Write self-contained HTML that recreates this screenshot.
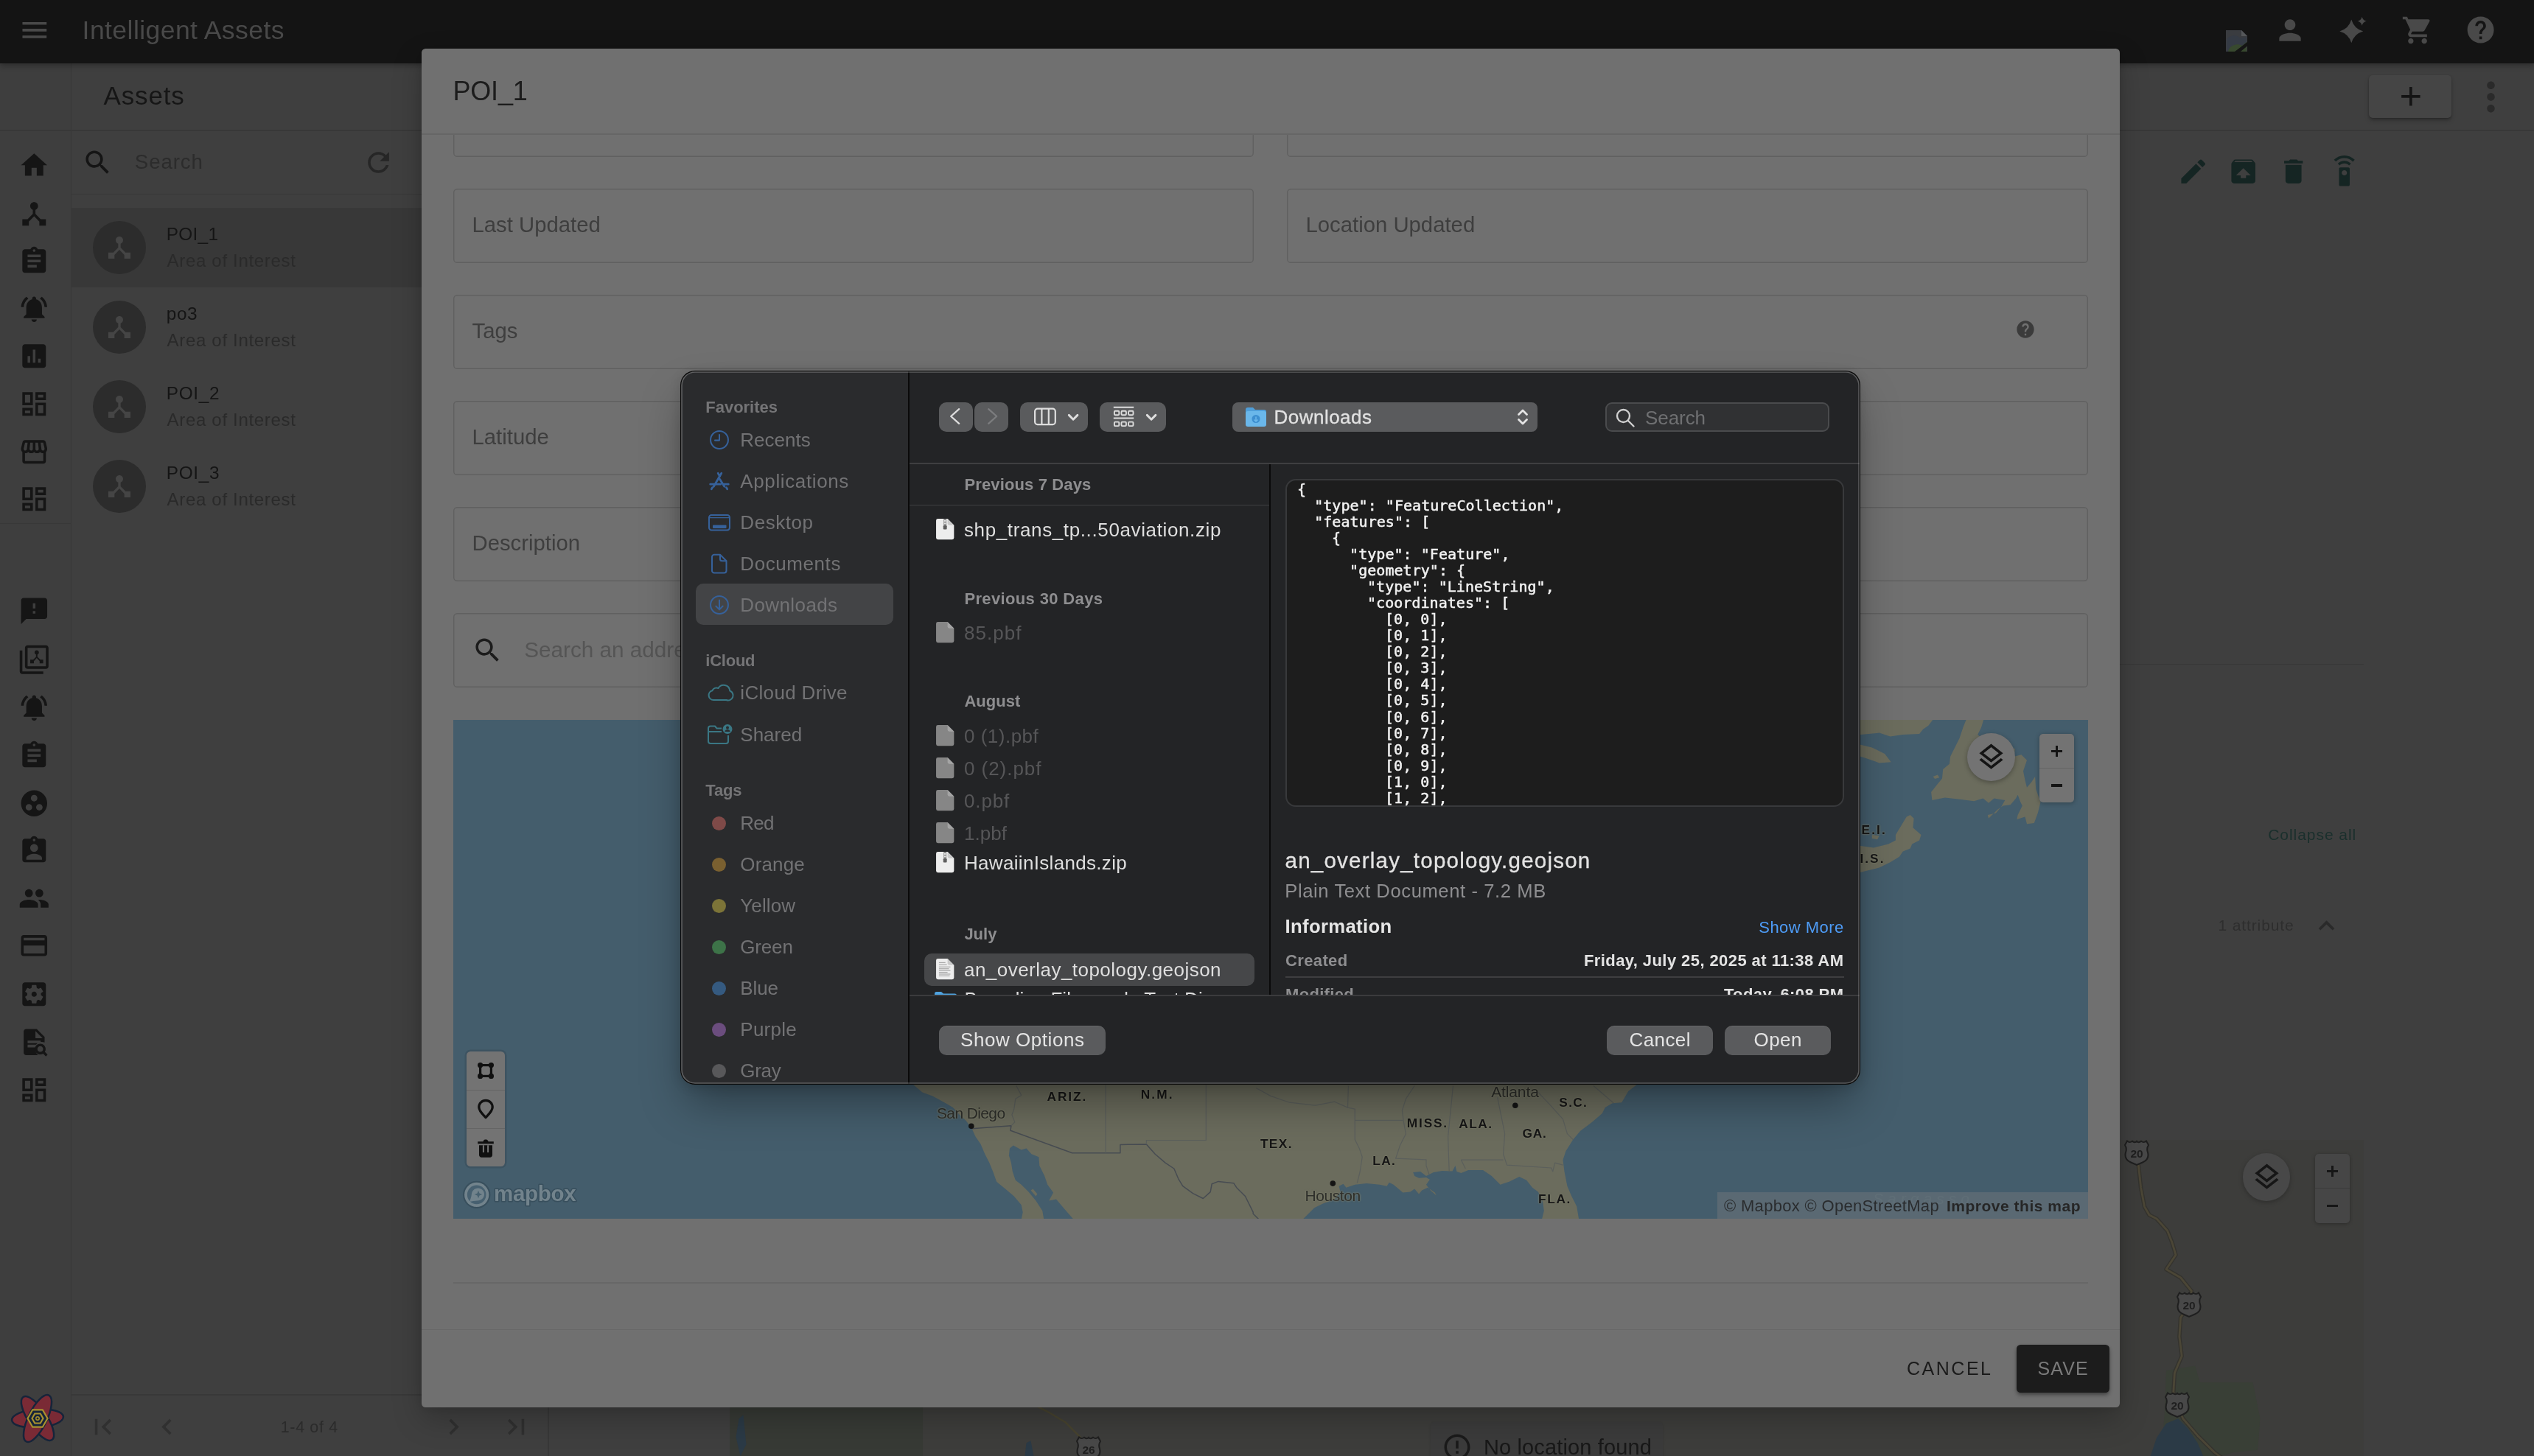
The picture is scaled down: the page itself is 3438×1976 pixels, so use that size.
<!DOCTYPE html>
<html lang="en"><head><meta charset="utf-8"><title>Intelligent Assets</title>
<style>
html,body{margin:0;padding:0;background:#3e3e3e;}
body{width:3438px;height:1976px;position:relative;overflow:hidden;font-family:"Liberation Sans",sans-serif;}
.t{position:absolute;white-space:pre;}
svg{display:block;overflow:visible;}
#root{position:absolute;left:0;top:0;width:3438px;height:1976px;will-change:transform;}
</style></head><body><div id="root">
<!-- app background -->
<div style="position:absolute;left:0px;top:0px;width:3438px;height:1976px;background:#3f3f3f;"></div>
<div style="position:absolute;left:0px;top:86px;width:96px;height:1890px;background:#3e3e3e;"></div>
<div style="position:absolute;left:96px;top:86px;width:1.3px;height:1890px;background:#383838;"></div>
<div style="position:absolute;left:0px;top:176px;width:3438px;height:1.5px;background:#383838;"></div>
<div class="t" style="left:140.60px;top:107.47px;font-size:35px;line-height:46px;color:#161616;letter-spacing:0.828px;">Assets</div>
<div style="position:absolute;left:743px;top:178px;width:1.5px;height:1798px;background:#383838;"></div>
<div style="position:absolute;left:97px;top:262.5px;width:647px;height:1.5px;background:#383838;"></div>
<svg style="position:absolute;left:111.10px;top:199.20px;" width="43" height="43" viewBox="0 0 24 24" fill="#151515"><path d="M15.5 14h-.79l-.28-.27C15.41 12.59 16 11.11 16 9.5 16 5.91 13.09 3 9.5 3S3 5.91 3 9.5 5.91 16 9.5 16c1.61 0 3.09-.59 4.23-1.57l.27.28v.79l5 4.99L20.49 19l-4.99-5zm-6 0C7.01 14 5 11.99 5 9.500S7.01 5 9.500 5 14 7.010 14 9.500 11.990 14 9.500 14z"/></svg>
<div class="t" style="left:182.80px;top:202.00px;font-size:27.7px;line-height:36px;color:#2c2c2c;letter-spacing:0.872px;">Search</div>
<svg style="position:absolute;left:492.10px;top:199.30px;" width="43" height="43" viewBox="0 0 24 24" fill="#262626"><path d="M17.65 6.35C16.2 4.9 14.21 4 12 4c-4.42 0-7.99 3.58-7.99 8s3.57 8 7.99 8c3.73 0 6.84-2.55 7.73-6h-2.08c-.82 2.33-3.04 4-5.65 4-3.31 0-6-2.69-6-6s2.69-6 6-6c1.66 0 3.14.69 4.22 1.78L13 11h7V4l-2.35 2.35z"/></svg>
<div style="position:absolute;left:97.3px;top:282px;width:646px;height:108px;background:#383838;"></div>
<div style="position:absolute;left:126px;top:299.8px;width:72px;height:72px;background:#2c2c2c;border-radius:50%;"></div>
<svg style="position:absolute;left:142.00px;top:315.80px;" width="40" height="40" viewBox="0 0 24 24" fill="#454545"><path d="M17 16l-4-4V8.82C14.16 8.4 15 7.3 15 6c0-1.66-1.34-3-3-3S9 4.34 9 6c0 1.3.84 2.4 2 2.82V12l-4 4H3v5h5v-3.05l4-4.2 4 4.2V21h5v-5h-4z"/></svg>
<div class="t" style="left:225.80px;top:301.65px;font-size:24.4px;line-height:32px;color:#151515;letter-spacing:0.265px;">POI_1</div>
<div class="t" style="left:226.60px;top:338.08px;font-size:24px;line-height:31px;color:#2a2a2a;letter-spacing:0.682px;">Area of Interest</div>
<div style="position:absolute;left:126px;top:407.9px;width:72px;height:72px;background:#2c2c2c;border-radius:50%;"></div>
<svg style="position:absolute;left:142.00px;top:423.90px;" width="40" height="40" viewBox="0 0 24 24" fill="#454545"><path d="M17 16l-4-4V8.82C14.16 8.4 15 7.3 15 6c0-1.66-1.34-3-3-3S9 4.34 9 6c0 1.3.84 2.4 2 2.82V12l-4 4H3v5h5v-3.05l4-4.2 4 4.2V21h5v-5h-4z"/></svg>
<div class="t" style="left:225.80px;top:409.75px;font-size:24.4px;line-height:32px;color:#151515;letter-spacing:0.596px;">po3</div>
<div class="t" style="left:226.60px;top:446.18px;font-size:24px;line-height:31px;color:#2a2a2a;letter-spacing:0.682px;">Area of Interest</div>
<div style="position:absolute;left:126px;top:516.0px;width:72px;height:72px;background:#2c2c2c;border-radius:50%;"></div>
<svg style="position:absolute;left:142.00px;top:532.00px;" width="40" height="40" viewBox="0 0 24 24" fill="#454545"><path d="M17 16l-4-4V8.82C14.16 8.4 15 7.3 15 6c0-1.66-1.34-3-3-3S9 4.34 9 6c0 1.3.84 2.4 2 2.82V12l-4 4H3v5h5v-3.05l4-4.2 4 4.2V21h5v-5h-4z"/></svg>
<div class="t" style="left:225.80px;top:517.85px;font-size:24.4px;line-height:32px;color:#151515;letter-spacing:0.665px;">POI_2</div>
<div class="t" style="left:226.60px;top:554.28px;font-size:24px;line-height:31px;color:#2a2a2a;letter-spacing:0.682px;">Area of Interest</div>
<div style="position:absolute;left:126px;top:624.0999999999999px;width:72px;height:72px;background:#2c2c2c;border-radius:50%;"></div>
<svg style="position:absolute;left:142.00px;top:640.10px;" width="40" height="40" viewBox="0 0 24 24" fill="#454545"><path d="M17 16l-4-4V8.82C14.16 8.4 15 7.3 15 6c0-1.66-1.34-3-3-3S9 4.34 9 6c0 1.3.84 2.4 2 2.82V12l-4 4H3v5h5v-3.05l4-4.2 4 4.2V21h5v-5h-4z"/></svg>
<div class="t" style="left:225.80px;top:625.95px;font-size:24.4px;line-height:32px;color:#151515;letter-spacing:0.665px;">POI_3</div>
<div class="t" style="left:226.60px;top:662.38px;font-size:24px;line-height:31px;color:#2a2a2a;letter-spacing:0.682px;">Area of Interest</div>
<div style="position:absolute;left:97px;top:1892.3px;width:647px;height:1.5px;background:#383838;"></div>
<svg style="position:absolute;left:118.10px;top:1915.10px;" width="43" height="43" viewBox="0 0 24 24" fill="#303030"><path d="M18.41 16.59L13.82 12l4.59-4.59L17 6l-6 6 6 6zM6 6h2v12H6z"/></svg>
<svg style="position:absolute;left:205.00px;top:1915.10px;" width="43" height="43" viewBox="0 0 24 24" fill="#303030"><path d="M15.41 7.41L14 6l-6 6 6 6 1.41-1.41L10.83 12z"/></svg>
<div class="t" style="left:380.80px;top:1922.68px;font-size:21.4px;line-height:28px;color:#2b2b2b;letter-spacing:0.679px;">1-4 of 4</div>
<svg style="position:absolute;left:593.70px;top:1915.10px;" width="43" height="43" viewBox="0 0 24 24" fill="#303030"><path d="M10 6L8.59 7.41 13.17 12l-4.58 4.59L10 18l6-6z"/></svg>
<svg style="position:absolute;left:678.90px;top:1915.10px;" width="43" height="43" viewBox="0 0 24 24" fill="#303030"><path d="M5.59 7.41L10.18 12l-4.59 4.59L7 18l6-6-6-6zM16 6h2v12h-2z"/></svg>
<svg style="position:absolute;left:25.10px;top:203.30px;" width="42.6" height="42.6" viewBox="0 0 24 24" fill="#151515"><path d="M10 20v-6h4v6h5v-8h3L12 3 2 12h3v8z"/></svg>
<svg style="position:absolute;left:25.10px;top:268.70px;" width="42.6" height="42.6" viewBox="0 0 24 24" fill="#151515"><path d="M17 16l-4-4V8.82C14.16 8.4 15 7.3 15 6c0-1.66-1.34-3-3-3S9 4.34 9 6c0 1.3.84 2.4 2 2.82V12l-4 4H3v5h5v-3.05l4-4.2 4 4.2V21h5v-5h-4z"/></svg>
<svg style="position:absolute;left:25.10px;top:332.90px;" width="42.6" height="42.6" viewBox="0 0 24 24" fill="#151515"><path d="M19 3h-4.18C14.4 1.84 13.3 1 12 1c-1.3 0-2.4.84-2.82 2H5c-1.1 0-2 .9-2 2v14c0 1.1.9 2 2 2h14c1.1 0 2-.9 2-2V5c0-1.1-.9-2-2-2zm-7 0c.55 0 1 .45 1 1s-.45 1-1 1-1-.45-1-1 .45-1 1-1zm2 14H7v-2h7v2zm3-4H7v-2h10v2zm0-4H7V7h10v2z"/></svg>
<svg style="position:absolute;left:25.10px;top:398.00px;" width="42.6" height="42.6" viewBox="0 0 24 24" fill="#151515"><path d="M7.58 4.08L6.15 2.65C3.75 4.48 2.17 7.3 2.03 10.5h2c.15-2.65 1.51-4.97 3.55-6.42zm12.39 6.42h2c-.15-3.2-1.73-6.02-4.12-7.85l-1.42 1.43c2.02 1.45 3.39 3.77 3.54 6.42zM18 11c0-3.07-1.64-5.64-4.5-6.32V4c0-.83-.67-1.5-1.5-1.5s-1.5.67-1.5 1.5v.68C7.63 5.36 6 7.92 6 11v5l-2 2v1h16v-1l-2-2v-5zm-6 11c.14 0 .27-.01.4-.04.65-.14 1.18-.58 1.44-1.18.1-.24.15-.5.15-.78h-4c.01 1.1.9 2 2.01 2z"/></svg>
<svg style="position:absolute;left:25.10px;top:462.20px;" width="42.6" height="42.6" viewBox="0 0 24 24" fill="#151515"><path d="M19 3H5c-1.1 0-2 .9-2 2v14c0 1.1.9 2 2 2h14c1.1 0 2-.9 2-2V5c0-1.1-.9-2-2-2zM9 17H7v-5h2v5zm4 0h-2V7h2v10zm4 0h-2v-3h2v3z"/></svg>
<svg style="position:absolute;left:25.10px;top:527.00px;" width="42.6" height="42.6" viewBox="0 0 24 24" fill="#151515"><path d="M19 5v2h-4V5h4M9 5v6H5V5h4m10 8v6h-4v-6h4M9 17v2H5v-2h4M21 3h-8v6h8V3zM11 3H3v10h8V3zm10 8h-8v10h8V11zm-10 4H3v6h8v-6z"/></svg>
<svg style="position:absolute;left:25.10px;top:592.20px;" width="42.6" height="42.6" viewBox="0 0 24 24" fill="#151515"><path d="M21.9 8.89l-1.05-4.37c-.22-.9-1-1.52-1.91-1.52H5.05c-.9 0-1.69.63-1.9 1.52L2.1 8.89c-.24 1.02-.02 2.06.62 2.88.08.11.19.19.28.29V19c0 1.1.9 2 2 2h14c1.1 0 2-.9 2-2v-6.94c.09-.09.2-.18.28-.28.64-.82.87-1.87.62-2.89zm-2.99-3.9l1.05 4.37c.1.42.01.84-.25 1.17-.14.18-.44.47-.94.47-.61 0-1.14-.49-1.21-1.14L16.98 5l1.93-.01zM13 5h1.96l.54 4.52c.05.39-.07.78-.33 1.07-.22.26-.54.41-.95.41-.67 0-1.22-.59-1.22-1.31V5zM8.49 9.52L9.04 5H11v4.69c0 .72-.55 1.31-1.29 1.31-.34 0-.65-.15-.89-.41-.25-.29-.37-.68-.33-1.07zm-4.45-.16L5.05 5h1.97l-.58 4.86c-.08.65-.6 1.14-1.21 1.14-.49 0-.8-.29-.93-.47-.27-.32-.36-.75-.26-1.17zM5 19v-6.03c.08.01.15.03.23.03.87 0 1.66-.36 2.24-.95.6.6 1.4.95 2.31.95.87 0 1.65-.36 2.23-.93.59.57 1.39.93 2.29.93.84 0 1.64-.35 2.24-.95.58.59 1.37.95 2.24.95.08 0 .15-.02.23-.03V19H5z"/></svg>
<svg style="position:absolute;left:25.10px;top:655.70px;" width="42.6" height="42.6" viewBox="0 0 24 24" fill="#151515"><path d="M19 5v2h-4V5h4M9 5v6H5V5h4m10 8v6h-4v-6h4M9 17v2H5v-2h4M21 3h-8v6h8V3zM11 3H3v10h8V3zm10 8h-8v10h8V11zm-10 4H3v6h8v-6z"/></svg>
<svg style="position:absolute;left:25.10px;top:807.70px;" width="42.6" height="42.6" viewBox="0 0 24 24" fill="#151515"><path d="M20 2H4c-1.1 0-1.99.9-1.99 2L2 22l4-4h14c1.1 0 2-.9 2-2V4c0-1.1-.9-2-2-2zm-7 12h-2v-2h2v2zm0-4h-2V6h2v4z"/></svg>
<svg style="position:absolute;left:25.10px;top:874.30px;" width="42.6" height="42.6" viewBox="0 0 24 24" fill="#151515"><path d="M3 5H1v16c0 1.1.9 2 2 2h16v-2H3V5zm18-4H7c-1.1 0-2 .9-2 2v14c0 1.1.9 2 2 2h14c1.1 0 2-.9 2-2V3c0-1.1-.9-2-2-2zm0 16H7V3h14v14z"/><g transform="translate(7.4,3.2) scale(0.55)"><path d="M17 16l-4-4V8.82C14.16 8.4 15 7.3 15 6c0-1.66-1.34-3-3-3S9 4.34 9 6c0 1.3.84 2.4 2 2.82V12l-4 4H3v5h5v-3.05l4-4.2 4 4.2V21h5v-5h-4z"/></g></svg>
<svg style="position:absolute;left:25.10px;top:939.10px;" width="42.6" height="42.6" viewBox="0 0 24 24" fill="#151515"><path d="M7.58 4.08L6.15 2.65C3.75 4.48 2.17 7.3 2.03 10.5h2c.15-2.65 1.51-4.97 3.55-6.42zm12.39 6.42h2c-.15-3.2-1.73-6.02-4.12-7.85l-1.42 1.43c2.02 1.45 3.39 3.77 3.54 6.42zM18 11c0-3.07-1.64-5.64-4.5-6.32V4c0-.83-.67-1.5-1.5-1.5s-1.5.67-1.5 1.5v.68C7.63 5.36 6 7.92 6 11v5l-2 2v1h16v-1l-2-2v-5zm-6 11c.14 0 .27-.01.4-.04.65-.14 1.18-.58 1.44-1.18.1-.24.15-.5.15-.78h-4c.01 1.1.9 2 2.01 2z"/></svg>
<svg style="position:absolute;left:25.10px;top:1004.10px;" width="42.6" height="42.6" viewBox="0 0 24 24" fill="#151515"><path d="M19 3h-4.18C14.4 1.84 13.3 1 12 1c-1.3 0-2.4.84-2.82 2H5c-1.1 0-2 .9-2 2v14c0 1.1.9 2 2 2h14c1.1 0 2-.9 2-2V5c0-1.1-.9-2-2-2zm-7 0c.55 0 1 .45 1 1s-.45 1-1 1-1-.45-1-1 .45-1 1-1zm2 14H7v-2h7v2zm3-4H7v-2h10v2zm0-4H7V7h10v2z"/></svg>
<svg style="position:absolute;left:25.10px;top:1069.20px;" width="42.6" height="42.6" viewBox="0 0 24 24" fill="#151515"><path d="M12 2C6.48 2 2 6.48 2 12s4.48 10 10 10 10-4.48 10-10S17.52 2 12 2zM8 17.5c-1.38 0-2.5-1.12-2.5-2.5s1.12-2.5 2.5-2.5 2.5 1.12 2.5 2.5-1.12 2.5-2.5 2.5zM9.5 8c0-1.38 1.12-2.5 2.5-2.5s2.5 1.12 2.5 2.5-1.12 2.5-2.5 2.5S9.5 9.38 9.5 8zm6.5 9.5c-1.38 0-2.5-1.12-2.5-2.5s1.12-2.5 2.5-2.5 2.5 1.12 2.5 2.5-1.12 2.5-2.5 2.5z"/></svg>
<svg style="position:absolute;left:25.10px;top:1133.30px;" width="42.6" height="42.6" viewBox="0 0 24 24" fill="#151515"><path d="M19 3h-4.18C14.4 1.84 13.3 1 12 1c-1.3 0-2.4.84-2.82 2H5c-1.1 0-2 .9-2 2v14c0 1.1.9 2 2 2h14c1.1 0 2-.9 2-2V5c0-1.1-.9-2-2-2zm-7 0c.55 0 1 .45 1 1s-.45 1-1 1-1-.45-1-1 .45-1 1-1zm0 4c1.66 0 3 1.34 3 3s-1.34 3-3 3-3-1.34-3-3 1.34-3 3-3zm6 12H6v-1.4c0-2 4-3.1 6-3.1s6 1.1 6 3.1V19z"/></svg>
<svg style="position:absolute;left:25.10px;top:1198.40px;" width="42.6" height="42.6" viewBox="0 0 24 24" fill="#151515"><path d="M16 11c1.66 0 2.99-1.34 2.99-3S17.66 5 16 5c-1.66 0-3 1.34-3 3s1.34 3 3 3zm-8 0c1.66 0 2.99-1.34 2.99-3S9.66 5 8 5C6.34 5 5 6.34 5 8s1.34 3 3 3zm0 2c-2.33 0-7 1.17-7 3.5V19h14v-2.5c0-2.33-4.67-3.5-7-3.5zm8 0c-.29 0-.62.02-.97.05 1.16.84 1.97 1.97 1.97 3.45V19h6v-2.5c0-2.33-4.67-3.5-7-3.5z"/></svg>
<svg style="position:absolute;left:25.10px;top:1262.30px;" width="42.6" height="42.6" viewBox="0 0 24 24" fill="#151515"><path d="M20 4H4c-1.11 0-1.99.89-1.99 2L2 18c0 1.11.89 2 2 2h16c1.11 0 2-.89 2-2V6c0-1.11-.89-2-2-2zm0 14H4v-6h16v6zm0-10H4V6h16v2z"/></svg>
<svg style="position:absolute;left:25.10px;top:1328.20px;" width="42.6" height="42.6" viewBox="0 0 24 24" fill="#151515"><path d="M12 10c-1.1 0-2 .9-2 2s.9 2 2 2 2-.9 2-2-.9-2-2-2zm7-7H5c-1.11 0-2 .9-2 2v14c0 1.1.89 2 2 2h14c1.11 0 2-.9 2-2V5c0-1.1-.89-2-2-2zm-1.75 9c0 .23-.02.46-.05.68l1.48 1.16c.13.11.17.3.08.45l-1.4 2.42c-.09.15-.27.21-.43.15l-1.74-.7c-.36.28-.76.51-1.18.69l-.26 1.85c-.03.17-.18.3-.35.3h-2.8c-.17 0-.32-.13-.35-.29l-.26-1.85c-.43-.18-.82-.41-1.18-.69l-1.74.7c-.16.06-.34 0-.43-.15l-1.4-2.42c-.09-.15-.05-.34.08-.45l1.48-1.16c-.03-.23-.05-.46-.05-.69 0-.23.02-.46.05-.68l-1.48-1.16c-.13-.11-.17-.3-.08-.45l1.4-2.42c.09-.15.27-.21.43-.15l1.74.7c.36-.28.76-.51 1.18-.69l.26-1.85c.03-.17.18-.3.35-.3h2.8c.17 0 .32.13.35.29l.26 1.85c.43.18.82.41 1.18.69l1.74-.7c.16-.06.34 0 .43.15l1.4 2.42c.09.15.05.34-.08.45l-1.48 1.16c.03.23.05.46.05.69z"/></svg>
<svg style="position:absolute;left:25.10px;top:1392.70px;" width="42.6" height="42.6" viewBox="0 0 24 24" fill="#151515"><path d="M14 2H6c-1.1 0-2 .9-2 2v16c0 1.1.9 2 2 2h9.1c-.4-.3-.7-.6-1-1-.7-.9-1.1-2-1.1-3.2 0-.6.1-1.2.3-1.8H7v-2h6.4c.4-.5.8-.9 1.300-1.200H7v-2h10v1.100c.3-.1.7-.1 1-.1 .7 0 1.400.100 2 .400V8l-6-6zm-1 7V3.500L18.500 9H13z"/><path d="M22.300 21.600l-2.100-2.100c.4-.7.6-1.400.6-2.200 0-2.300-1.800-4.100-4.100-4.100s-4.100 1.800-4.100 4.100 1.800 4.100 4.100 4.100c.8 0 1.600-.2 2.200-.6l2.100 2.100 1.300-1.300zm-5.600-2.100c-1.200 0-2.200-1-2.200-2.200s1-2.200 2.200-2.200 2.200 1 2.200 2.200-1 2.200-2.200 2.200z"/></svg>
<svg style="position:absolute;left:25.10px;top:1457.60px;" width="42.6" height="42.6" viewBox="0 0 24 24" fill="#151515"><path d="M19 5v2h-4V5h4M9 5v6H5V5h4m10 8v6h-4v-6h4M9 17v2H5v-2h4M21 3h-8v6h8V3zM11 3H3v10h8V3zm10 8h-8v10h8V11zm-10 4H3v6h8v-6z"/></svg>
<div style="position:absolute;left:0px;top:709.5px;width:96px;height:1.5px;background:#383838;"></div>
<div style="position:absolute;left:3214px;top:102.4px;width:112.4px;height:57.4px;background:#454545;border-radius:5px;box-shadow:0 4px 6px -1px rgba(0,0,0,.28),0 1px 3px rgba(0,0,0,.2);"></div>
<svg style="position:absolute;left:3248.65px;top:108.65px;" width="43.7" height="43.7" viewBox="0 0 24 24" fill="#141414"><path d="M19 13h-6v6h-2v-6H5v-2h6V5h2v6h6v2z"/></svg>
<svg style="position:absolute;left:3347.90px;top:99.80px;" width="63" height="63" viewBox="0 0 24 24" fill="#2a2a2a"><path d="M12 8c1.1 0 2-.9 2-2s-.9-2-2-2-2 .9-2 2 .9 2 2 2zm0 2c-1.1 0-2 .9-2 2s.9 2 2 2 2-.9 2-2-.9-2-2-2zm0 6c-1.1 0-2 .9-2 2s.9 2 2 2 2-.9 2-2-.9-2-2-2z"/></svg>
<svg style="position:absolute;left:2953.90px;top:210.50px;" width="43.4" height="43.4" viewBox="0 0 24 24" fill="#152523"><path d="M3 17.25V21h3.75L17.81 9.94l-3.75-3.75L3 17.25zM20.71 7.04c.39-.39.39-1.02 0-1.41l-2.34-2.34c-.39-.39-1.02-.39-1.41 0l-1.83 1.83 3.75 3.75 1.83-1.83z"/></svg>
<svg style="position:absolute;left:3022.10px;top:210.50px;" width="43.4" height="43.4" viewBox="0 0 24 24" fill="#152523"><path d="M20.55 5.22l-1.39-1.68C18.88 3.21 18.47 3 18 3H6c-.47 0-.88.21-1.15.55L3.46 5.22C3.17 5.57 3 6.01 3 6.5V19c0 1.1.89 2 2 2h14c1.1 0 2-.9 2-2V6.5c0-.49-.17-.93-.45-1.28zM12 9.5l5.5 5.5H14v2h-4v-2H6.5L12 9.5zM5.12 5l.82-1h12l.93 1H5.12z"/></svg>
<svg style="position:absolute;left:3089.80px;top:210.50px;" width="43.4" height="43.4" viewBox="0 0 24 24" fill="#152523"><path d="M6 19c0 1.1.9 2 2 2h8c1.1 0 2-.9 2-2V7H6v12zM19 4h-3.5l-1-1h-5l-1 1H5v2h14V4z"/></svg>
<svg style="position:absolute;left:3159.00px;top:210.50px;" width="43.4" height="43.4" viewBox="0 0 24 24" fill="#152523"><path d="M15 9H9c-.55 0-1 .45-1 1v12c0 .55.45 1 1 1h6c.55 0 1-.45 1-1V10c0-.55-.45-1-1-1zm-3 6c-1.1 0-2-.9-2-2s.9-2 2-2 2 .9 2 2-.9 2-2 2zM7.05 6.05l1.41 1.41C9.37 6.56 10.62 6 12 6s2.63.56 3.54 1.46l1.41-1.41C15.68 4.78 13.93 4 12 4s-3.68.78-4.95 2.05zM12 0C8.96 0 6.21 1.23 4.22 3.22l1.41 1.41C7.26 3.01 9.51 2 12 2s4.74 1.01 6.36 2.64l1.41-1.41C17.79 1.23 15.04 0 12 0z"/></svg>
<div style="position:absolute;left:2876px;top:900.7px;width:331px;height:1.5px;background:#383838;"></div>
<div class="t" style="left:3077.20px;top:1119.02px;font-size:21px;line-height:27px;color:#1a2f2c;letter-spacing:0.953px;">Collapse all</div>
<div class="t" style="left:3009.50px;top:1242.32px;font-size:21px;line-height:27px;color:#2e2e2e;letter-spacing:0.873px;">1 attribute</div>
<svg style="position:absolute;left:3135.20px;top:1234.50px;" width="43" height="43" viewBox="0 0 24 24" fill="#2a2a2a"><path d="M12 8l-6 6 1.41 1.41L12 10.83l4.59 4.58L18 14z"/></svg>
<div style="position:absolute;left:989.5px;top:1546.7px;width:2217px;height:430px;background:#3d3d3b;overflow:hidden;"><svg style="position:absolute;left:0;top:0" width="2219" height="430" viewBox="0 0 2219 430"><rect x="0" y="362" width="262" height="68" fill="#373a35"/><polygon points="12.5,378.3 18.5,373.3 22.5,413.3 14.5,429.3 8.5,403.3" fill="#2b3a46"/><polygon points="402.5,411.3 408.5,408.3 412.5,429.3 400.5,429.3" fill="#2b3a46"/><polyline points="410.5,358.3 430.5,368.3 455.5,383.3 474.5,402.3 486.5,420.3" fill="none" stroke="#47432f" stroke-width="2.500"/><polygon points="1942.4,433.8 1947.3,361.9 1949.0,312.9 1988.2,306.4 1994.7,329.2 2066.6,329.2 2076.4,378.3 2073.2,420.8 2040.5,424.0 2007.8,433.8" fill="#393f36"/><polygon points="1926.1,433.8 1935.9,404.4 1949.0,384.8 1965.3,378.3 1978.4,391.4 1991.5,411.0 2001.3,433.8" fill="#2b3a46"/><polyline points="1909.1,18.7 1911.4,35.0 1914.6,64.4 1919.5,90.6 1926.1,102.0 1935.9,106.9 1950.6,123.3 1957.1,139.6 1962.0,156.0 1949.0,175.6 1968.6,187.0 1983.3,205.0 1980.3,224.6 1968.6,241.0 1966.9,267.1 1970.2,293.3 1960.4,316.2 1958.8,342.3 1964.0,360.3 1971.8,378.3 1991.5,401.2 2014.3,424.0 2027.4,433.8" fill="none" stroke="#34332e" stroke-width="5.500" stroke-linejoin="round"/><polyline points="1909.1,18.7 1911.4,35.0 1914.6,64.4 1919.5,90.6 1926.1,102.0 1935.9,106.9 1950.6,123.3 1957.1,139.6 1962.0,156.0 1949.0,175.6 1968.6,187.0 1983.3,205.0 1980.3,224.6 1968.6,241.0 1966.9,267.1 1970.2,293.3 1960.4,316.2 1958.8,342.3 1964.0,360.3 1971.8,378.3 1991.5,401.2 2014.3,424.0 2027.4,433.8" fill="none" stroke="#4b4636" stroke-width="2.800" stroke-linejoin="round"/></svg><svg style="position:absolute;left:1891.1px;top:-0.20000000000004547px" width="36" height="35" viewBox="0 0 36 35"><path d="M5 1.500c2 2 5 2 7 .300 2 1.800 4.500 2 6 0 1.500 2 4 1.800 6 0 2 1.700 5 1.700 7-.300l3 5.500c-2 3-2.500 6-1 10 1.500 6-1 11-7 13.500l-8 3.500-8-3.500c-6-2.500-8.500-7.500-7-13.500 1.500-4 1-7-1-10z" fill="#484848" stroke="#1f1f1f" stroke-width="2"/><text x="18" y="23.500" font-family="Liberation Sans,sans-serif" font-size="15.500" font-weight="700" text-anchor="middle" fill="#1f1f1f">20</text></svg><svg style="position:absolute;left:1962.3000000000002px;top:206.5px" width="36" height="35" viewBox="0 0 36 35"><path d="M5 1.500c2 2 5 2 7 .300 2 1.800 4.500 2 6 0 1.500 2 4 1.800 6 0 2 1.700 5 1.700 7-.300l3 5.500c-2 3-2.500 6-1 10 1.500 6-1 11-7 13.500l-8 3.500-8-3.500c-6-2.500-8.500-7.500-7-13.500 1.500-4 1-7-1-10z" fill="#484848" stroke="#1f1f1f" stroke-width="2"/><text x="18" y="23.500" font-family="Liberation Sans,sans-serif" font-size="15.500" font-weight="700" text-anchor="middle" fill="#1f1f1f">20</text></svg><svg style="position:absolute;left:1946.0px;top:342.79999999999995px" width="36" height="35" viewBox="0 0 36 35"><path d="M5 1.500c2 2 5 2 7 .300 2 1.800 4.500 2 6 0 1.500 2 4 1.800 6 0 2 1.700 5 1.700 7-.300l3 5.500c-2 3-2.500 6-1 10 1.500 6-1 11-7 13.500l-8 3.500-8-3.500c-6-2.500-8.500-7.500-7-13.500 1.500-4 1-7-1-10z" fill="#484848" stroke="#1f1f1f" stroke-width="2"/><text x="18" y="23.500" font-family="Liberation Sans,sans-serif" font-size="15.500" font-weight="700" text-anchor="middle" fill="#1f1f1f">20</text></svg><svg style="position:absolute;left:469.5px;top:402.79999999999995px" width="36" height="35" viewBox="0 0 36 35"><path d="M5 1.500c2 2 5 2 7 .300 2 1.800 4.500 2 6 0 1.500 2 4 1.800 6 0 2 1.700 5 1.700 7-.300l3 5.500c-2 3-2.500 6-1 10 1.500 6-1 11-7 13.500l-8 3.500-8-3.500c-6-2.500-8.500-7.500-7-13.500 1.500-4 1-7-1-10z" fill="#484848" stroke="#1f1f1f" stroke-width="2"/><text x="18" y="23.500" font-family="Liberation Sans,sans-serif" font-size="15.500" font-weight="700" text-anchor="middle" fill="#1f1f1f">26</text></svg><div style="position:absolute;left:2053.4px;top:18.500000000000043px;width:64.4px;height:64.4px;background:#484848;border-radius:50%;box-shadow:0 2px 6px rgba(0,0,0,.25);"></div><svg style="position:absolute;left:2064.10px;top:29.20px;" width="43" height="43" viewBox="0 0 24 24" fill="#161616"><path d="M11.99 18.54l-7.37-5.73L3 14.07l9 7 9-7-1.63-1.27-7.38 5.74zM12 16l7.36-5.73L21 9l-9-7-9 7 1.63 1.27L12 16zm0-11.47L17.74 9 12 13.47 6.26 9 12 4.53z"/></svg><div style="position:absolute;left:2151.6px;top:19.299999999999955px;width:46.8px;height:94.2px;background:#464646;border-radius:5px;box-shadow:0 1px 5px rgba(0,0,0,.3);"></div><div style="position:absolute;left:2151.6px;top:65.39999999999986px;width:46.8px;height:1px;background:#3b3b3b;"></div><div style="position:absolute;left:2167.4500000000003px;top:40.85px;width:14.7px;height:3.3px;background:#161616;"></div><div style="position:absolute;left:2173.15px;top:35.15px;width:3.3px;height:14.7px;background:#161616;"></div><div style="position:absolute;left:2167.4500000000003px;top:87.9499999999999px;width:14.7px;height:3.3px;background:#161616;"></div></div>
<div style="position:absolute;left:1941px;top:1929px;width:315px;height:60px;background:#3b3b3b;border-radius:6px;box-shadow:0 1px 4px rgba(0,0,0,.15);"></div>
<svg style="position:absolute;left:1955.50px;top:1943.00px;" width="42" height="42" viewBox="0 0 24 24" fill="#1a1a1a"><path d="M11 15h2v2h-2zm0-8h2v6h-2zm.99-5C6.47 2 2 6.48 2 12s4.47 10 9.99 10C17.52 22 22 17.52 22 12S17.52 2 11.99 2zM12 20c-4.42 0-8-3.58-8-8s3.58-8 8-8 8 3.58 8 8-3.58 8-8 8z"/></svg>
<div class="t" style="left:2013.00px;top:1945.45px;font-size:29px;line-height:38px;color:#181818;letter-spacing:0.134px;">No location found</div>
<svg style="position:absolute;left:13.0px;top:1886.7px" width="76" height="76" viewBox="-38 -38 76 76"><g fill="#7a2a35" stroke="#16243a" stroke-width="2.500" transform="rotate(-4)"><ellipse rx="35" ry="12.500" transform="rotate(0)"/><ellipse rx="35" ry="12.500" transform="rotate(60)"/><ellipse rx="35" ry="12.500" transform="rotate(120)"/></g><g fill="none" stroke="#a8912f" stroke-width="2.200" transform="rotate(30)"><path d="M0 -13.500l11.700 6.750v13.500L0 13.500l-11.700-6.750v-13.500z" fill="#16243a"/><path d="M0 -7.500l6.500 3.750v7.500L0 7.500l-6.500-3.750v-7.500z"/></g><circle r="2.200" fill="none" stroke="#a8912f" stroke-width="1.500"/></svg>
<div style="position:absolute;left:0px;top:0px;width:3438px;height:86px;background:#141414;box-shadow:0 3px 8px rgba(0,0,0,.3);"></div>
<svg style="position:absolute;left:24.75px;top:18.75px;" width="43.7" height="43.7" viewBox="0 0 24 24" fill="#494949"><path d="M3 18h18v-2H3v2zm0-5h18v-2H3v2zm0-7v2h18V6H3z"/></svg>
<div class="t" style="left:111.60px;top:18.06px;font-size:35.6px;line-height:46px;color:#494949;letter-spacing:0.408px;">Intelligent Assets</div>
<svg style="position:absolute;left:3084.60px;top:18.60px;" width="44" height="44" viewBox="0 0 24 24" fill="#494949"><path d="M12 12c2.21 0 4-1.79 4-4s-1.79-4-4-4-4 1.79-4 4 1.79 4 4 4zm0 2c-2.67 0-8 1.34-8 4v2h16v-2c0-2.66-5.33-4-8-4z"/></svg>
<svg style="position:absolute;left:3169.8px;top:19px" width="44" height="44" viewBox="0 0 24 24" fill="#494949"><path d="M11.05 4.05Q12.96 10.84 19.75 12.75Q12.96 14.66 11.05 21.45Q9.14 14.66 2.35 12.75Q9.14 10.84 11.05 4.05z"/><path d="M18.90 2.00Q19.56 4.64 22.20 5.30Q19.56 5.96 18.90 8.60Q18.24 5.96 15.60 5.30Q18.24 4.64 18.90 2.00z"/></svg>
<svg style="position:absolute;left:3258.20px;top:18.50px;" width="44" height="44" viewBox="0 0 24 24" fill="#494949"><path d="M7 18c-1.1 0-1.99.9-1.99 2S5.9 22 7 22s2-.9 2-2-.9-2-2-2zM1 2v2h2l3.6 7.59-1.35 2.45c-.16.28-.25.61-.25.96 0 1.1.9 2 2 2h12v-2H7.42c-.14 0-.25-.11-.25-.25l.03-.12.9-1.63h7.45c.75 0 1.41-.41 1.75-1.03l3.58-6.49c.08-.14.12-.31.12-.48 0-.55-.45-1-1-1H5.21l-.94-2H1zm16 16c-1.1 0-1.99.9-1.99 2s.89 2 1.99 2 2-.9 2-2-.9-2-2-2z"/></svg>
<svg style="position:absolute;left:3344.10px;top:19.00px;" width="43.2" height="43.2" viewBox="0 0 24 24" fill="#494949"><path d="M12 2C6.48 2 2 6.48 2 12s4.48 10 10 10 10-4.48 10-10S17.52 2 12 2zm1 17h-2v-2h2v2zm2.07-7.75l-.9.92C13.45 12.9 13 13.5 13 15h-2v-.5c0-1.1.45-2.1 1.17-2.83l1.24-1.26c.37-.36.59-.86.59-1.41 0-1.1-.9-2-2-2s-2 .9-2 2H8c0-2.21 1.79-4 4-4s4 1.79 4 4c0 .88-.36 1.68-.93 2.25z"/></svg>
<svg style="position:absolute;left:3020.2px;top:41.2px" width="29" height="29" viewBox="0 0 29 29"><path d="M0 0h21l8 8v21H0z" fill="#3a3c40"/><path d="M21 0v8h8z" fill="#55575a"/><path d="M1 12c6-6 13-6 19-1l8-2v20H1z" fill="#353b45"/><path d="M3 29c2-9 12-12 19-8l6-5v13z" fill="#38492f"/><path d="M12 29L29 16v5.500L20 29z" fill="#151515"/></svg>
<!-- modal -->
<div style="position:absolute;left:572px;top:66px;width:2304px;height:1843.5px;background:#707070;border-radius:5.500px;box-shadow:0 16px 40px rgba(0,0,0,.22),0 0 14px rgba(0,0,0,.12);"></div>
<div class="t" style="left:614.50px;top:100.03px;font-size:36px;line-height:47px;color:#1c1c1c;letter-spacing:-0.212px;">POI_1</div>
<div style="position:absolute;left:615px;top:160px;width:1086px;height:52.5px;border-radius:5.300px;box-shadow:inset 0 0 0 1.400px #606060;"></div>
<div style="position:absolute;left:1746px;top:160px;width:1087px;height:52.5px;border-radius:5.300px;box-shadow:inset 0 0 0 1.400px #606060;"></div>
<div style="position:absolute;left:574px;top:150px;width:2300px;height:31.3px;background:#707070;"></div>
<div style="position:absolute;left:572px;top:181.3px;width:2304px;height:1.4px;background:#666666;"></div>
<div style="position:absolute;left:615px;top:256px;width:1086px;height:101px;border-radius:5.300px;box-shadow:inset 0 0 0 1.400px #606060;"></div><div class="t" style="left:640.50px;top:285.85px;font-size:29.3px;line-height:38px;color:#3e3e3e;">Last Updated</div>
<div style="position:absolute;left:1746px;top:256px;width:1087px;height:101px;border-radius:5.300px;box-shadow:inset 0 0 0 1.400px #606060;"></div><div class="t" style="left:1771.50px;top:285.85px;font-size:29.3px;line-height:38px;color:#3e3e3e;">Location Updated</div>
<div style="position:absolute;left:615px;top:400px;width:2218px;height:101px;border-radius:5.300px;box-shadow:inset 0 0 0 1.400px #606060;"></div><div class="t" style="left:640.50px;top:429.85px;font-size:29.3px;line-height:38px;color:#3e3e3e;">Tags</div>
<svg style="position:absolute;left:2734.00px;top:432.50px;" width="28" height="28" viewBox="0 0 24 24" fill="#3b3b3b"><path d="M12 2C6.48 2 2 6.48 2 12s4.48 10 10 10 10-4.48 10-10S17.52 2 12 2zm1 17h-2v-2h2v2zm2.07-7.75l-.9.92C13.45 12.9 13 13.5 13 15h-2v-.5c0-1.1.45-2.1 1.17-2.83l1.24-1.26c.37-.36.59-.86.59-1.41 0-1.1-.9-2-2-2s-2 .9-2 2H8c0-2.21 1.79-4 4-4s4 1.79 4 4c0 .88-.36 1.68-.93 2.25z"/></svg>
<div style="position:absolute;left:615px;top:544px;width:1086px;height:101px;border-radius:5.300px;box-shadow:inset 0 0 0 1.400px #606060;"></div><div class="t" style="left:640.50px;top:573.85px;font-size:29.3px;line-height:38px;color:#3e3e3e;">Latitude</div>
<div style="position:absolute;left:1746px;top:544px;width:1087px;height:101px;border-radius:5.300px;box-shadow:inset 0 0 0 1.400px #606060;"></div>
<div style="position:absolute;left:615px;top:688px;width:1086px;height:101px;border-radius:5.300px;box-shadow:inset 0 0 0 1.400px #606060;"></div><div class="t" style="left:640.50px;top:717.85px;font-size:29.3px;line-height:38px;color:#3e3e3e;">Description</div>
<div style="position:absolute;left:1746px;top:688px;width:1087px;height:101px;border-radius:5.300px;box-shadow:inset 0 0 0 1.400px #606060;"></div>
<div style="position:absolute;left:615px;top:832px;width:2218px;height:101px;border-radius:5.300px;box-shadow:inset 0 0 0 1.400px #606060;"></div>
<svg style="position:absolute;left:639.90px;top:860.90px;" width="43" height="43" viewBox="0 0 24 24" fill="#1c1c1c"><path d="M15.5 14h-.79l-.28-.27C15.41 12.59 16 11.11 16 9.5 16 5.91 13.09 3 9.5 3S3 5.91 3 9.5 5.91 16 9.5 16c1.61 0 3.09-.59 4.23-1.57l.27.28v.79l5 4.99L20.49 19l-4.99-5zm-6 0C7.01 14 5 11.99 5 9.500S7.01 5 9.500 5 14 7.010 14 9.500 11.990 14 9.500 14z"/></svg>
<div class="t" style="left:711.20px;top:862.21px;font-size:29.7px;line-height:39px;color:#555555;">Search an address</div>
<div style="position:absolute;left:614.8px;top:977px;width:2218.4px;height:677px;background:#445d6c;overflow:hidden;"><svg style="position:absolute;left:0;top:0" width="2218" height="677" viewBox="0 0 2218 677"><polygon points="616.8,482.7 624.7,495.6 636.5,505.4 650.3,510.4 668.1,520.2 677.9,526.1 687.8,537.0 695.7,543.9 703.6,554.8 708.5,565.6 715.4,575.5 721.3,589.3 727.3,601.1 732.2,613.0 737.1,626.8 749.0,636.6 760.8,646.5 770.7,658.3 772.7,668.2 770.7,678.1 801.3,678.1 799.3,666.2 790.4,652.4 780.5,640.6 770.7,630.7 762.8,624.8 758.8,613.0 756.9,601.1 753.9,591.3 754.9,581.4 759.8,577.4 770.7,583.4 777.6,581.4 784.5,589.3 794.4,593.2 795.3,605.1 802.2,618.9 806.2,630.7 814.1,641.6 808.2,652.4 818.0,650.5 827.9,662.3 841.7,678.1 1152.3,678.1 1162.2,668.2 1168.1,662.3 1179.9,656.4 1195.7,650.5 1203.6,640.6 1201.6,632.7 1207.5,629.7 1211.5,634.7 1223.3,630.7 1239.1,629.1 1256.9,630.7 1266.7,632.7 1269.7,627.8 1275.6,630.7 1282.5,636.6 1288.4,641.6 1298.3,640.6 1304.2,636.6 1310.1,643.5 1314.1,638.6 1322.0,634.7 1331.8,641.6 1333.8,645.5 1325.9,638.6 1320.0,630.7 1324.9,623.8 1320.0,620.9 1310.1,621.8 1304.2,618.9 1302.2,613.9 1312.1,613.0 1320.0,618.9 1329.9,613.9 1341.7,612.0 1355.5,612.6 1359.5,605.1 1361.4,613.0 1367.4,614.9 1377.2,611.0 1397.0,611.0 1408.8,618.9 1420.6,630.7 1432.5,626.8 1446.3,619.9 1456.2,624.8 1464.0,634.7 1471.9,640.6 1477.9,652.4 1479.8,666.2 1476.9,678.1 1527.2,678.1 1524.2,660.3 1517.3,646.5 1511.4,632.7 1507.5,613.0 1505.5,597.2 1509.4,585.3 1519.3,569.6 1529.2,557.7 1544.9,545.9 1558.8,534.0 1562.7,526.1 1572.6,520.2 1585.2,519.2 1594.2,504.0 1621.2,483.0" fill="#6b6c5d"/><polygon points="783.5,638.6 786.5,636.6 792.4,643.5 790.4,646.5" fill="#6b6c5d"/><polygon points="1885.2,-2.2 2008.8,-2.2 2001.4,7.7 1994.0,12.7 1989.1,18.9 1966.8,20.1 1949.5,22.6 1934.7,17.6 1909.4,20.1 1885.2,20.1" fill="#6b6c5d"/><polygon points="1885.2,32.5 1909.4,33.7 1924.8,37.4 1942.1,46.1 1950.7,57.2 1934.7,58.4 1917.3,52.2 1909.4,49.8 1885.2,49.8" fill="#6b6c5d"/><polygon points="2053.4,-2.2 2076.8,-2.2 2073.1,10.2 2068.2,20.1 2083.0,32.5 2107.8,44.8 2118.9,38.6 2117.6,49.8 2127.5,47.3 2135.0,54.7 2130.0,69.5 2132.5,81.9 2135.0,91.8 2141.1,84.4 2146.1,77.0 2147.3,94.3 2153.5,111.6 2149.8,126.4 2144.8,140.0 2135.0,141.3 2132.5,131.4 2121.4,135.1 2122.6,128.9 2128.8,116.5 2126.3,111.6 2122.6,101.7 2120.1,106.6 2112.7,115.3 2102.8,116.5 2095.4,121.5 2083.0,133.8 2081.8,128.9 2092.9,126.4 2100.3,117.8 2105.3,109.1 2090.4,106.6 2083.0,112.8 2075.6,106.6 2063.2,110.3 2045.9,107.9 2023.7,105.4 2006.4,109.1 2005.1,98.0 2013.8,86.9 2020.0,79.4 2021.2,67.1 2029.9,59.7 2031.1,49.8 2036.0,39.9 2043.5,25.0 2048.4,10.2" fill="#6b6c5d"/><polygon points="1976.7,128.9 1981.6,133.8 1980.4,146.2 1991.5,156.1 1989.1,163.5 1979.2,168.5 1976.7,174.6 1966.8,178.4 1961.9,185.8 1949.5,193.2 1934.7,200.6 1909.4,206.8 1885.2,210.5 1885.2,170.9 1909.4,170.9 1927.2,173.4 1947.0,168.5 1956.9,163.5 1956.9,156.1 1964.3,143.7 1971.7,131.4" fill="#6b6c5d"/><polygon points="1924.8,156.1 1934.7,157.3 1932.2,162.3 1924.8,161.0" fill="#6b6c5d"/><polygon points="2007.6,77.0 2013.8,74.5 2016.3,78.2 2010.1,79.9" fill="#6b6c5d"/><polyline points="703.6,554.8 756.9,550.8 755.9,557.3 839.7,587.7 904.9,587.7 904.9,576.5 940.4,575.9 952.2,589.3 966.0,601.1 977.9,609.0 983.8,622.8 989.7,632.7 1003.5,642.6 1017.3,649.5 1027.2,640.6 1029.2,629.7 1038.0,626.4 1058.8,628.7 1062.7,634.7 1074.5,646.5 1085.2,668.2 1085.2,670.2 1093.1,678.1" fill="none" stroke="#474c52" stroke-width="1.5" stroke-linejoin="round"/><polyline points="763.8,496.5 770.7,509.4 762.8,514.3 760.8,528.1 757.9,536.0 761.8,545.9 756.9,550.8" fill="none" stroke="#5b5f5c" stroke-width="1.2" stroke-linejoin="round"/><polyline points="885.1,495.6 885.1,587.7" fill="none" stroke="#5b5f5c" stroke-width="1.2" stroke-linejoin="round"/><polyline points="1021.3,495.6 1021.3,570.5 940.4,570.5 940.4,575.9" fill="none" stroke="#5b5f5c" stroke-width="1.2" stroke-linejoin="round"/><polyline points="1089.1,499.5 1108.9,510.4 1134.5,519.2 1170.0,523.2 1195.7,518.2 1213.5,526.1 1223.3,528.1 1223.3,569.6 1229.2,581.4 1233.2,593.2 1230.2,613.0 1226.3,628.7" fill="none" stroke="#5b5f5c" stroke-width="1.2" stroke-linejoin="round"/><polyline points="1223.3,543.3 1288.4,543.3" fill="none" stroke="#5b5f5c" stroke-width="1.2" stroke-linejoin="round"/><polyline points="1214.4,496.5 1213.5,526.1" fill="none" stroke="#5b5f5c" stroke-width="1.2" stroke-linejoin="round"/><polyline points="1304.2,496.5 1292.4,514.3 1287.4,530.1 1289.4,545.9 1292.4,561.7 1284.5,577.4 1278.6,595.2 1320.0,596.8 1320.0,605.1 1324.0,616.9" fill="none" stroke="#5b5f5c" stroke-width="1.2" stroke-linejoin="round"/><polyline points="1356.5,496.5 1349.6,565.6 1351.2,613.0" fill="none" stroke="#5b5f5c" stroke-width="1.2" stroke-linejoin="round"/><polyline points="1416.7,512.3 1426.6,561.7 1424.6,589.3 1429.5,604.1 1489.7,608.0 1491.7,613.0 1494.6,601.1 1505.5,604.1" fill="none" stroke="#5b5f5c" stroke-width="1.2" stroke-linejoin="round"/><polyline points="1373.3,609.0 1367.4,597.2 1424.6,597.2" fill="none" stroke="#5b5f5c" stroke-width="1.2" stroke-linejoin="round"/><polyline points="1471.9,505.4 1487.7,522.2 1505.5,541.9 1511.4,561.7 1519.3,569.6" fill="none" stroke="#5b5f5c" stroke-width="1.2" stroke-linejoin="round"/><polyline points="1546.9,496.5 1574.5,520.2" fill="none" stroke="#5b5f5c" stroke-width="1.2" stroke-linejoin="round"/><circle cx="702.8" cy="551.2" r="3.8" fill="#141414"/><circle cx="1193.3" cy="629.1" r="3.8" fill="#141414"/><circle cx="1440.8" cy="523.2" r="3.8" fill="#141414"/></svg><div class="t" style="left:805.80px;top:499.71px;font-size:17.3px;line-height:22px;color:#161616;font-weight:700;letter-spacing:1.866px;text-shadow:0 0 3px rgba(125,126,108,.9),0 0 2px rgba(125,126,108,.9);">ARIZ.</div><div class="t" style="left:932.90px;top:497.31px;font-size:17.3px;line-height:22px;color:#161616;font-weight:700;letter-spacing:2.121px;text-shadow:0 0 3px rgba(125,126,108,.9),0 0 2px rgba(125,126,108,.9);">N.M.</div><div class="t" style="left:1095.10px;top:564.41px;font-size:17.3px;line-height:22px;color:#161616;font-weight:700;letter-spacing:1.387px;text-shadow:0 0 3px rgba(125,126,108,.9),0 0 2px rgba(125,126,108,.9);">TEX.</div><div class="t" style="left:1247.40px;top:587.01px;font-size:17.3px;line-height:22px;color:#161616;font-weight:700;letter-spacing:1.444px;text-shadow:0 0 3px rgba(125,126,108,.9),0 0 2px rgba(125,126,108,.9);">LA.</div><div class="t" style="left:1294.00px;top:536.41px;font-size:17.3px;line-height:22px;color:#161616;font-weight:700;letter-spacing:1.820px;text-shadow:0 0 3px rgba(125,126,108,.9),0 0 2px rgba(125,126,108,.9);">MISS.</div><div class="t" style="left:1364.40px;top:537.21px;font-size:17.3px;line-height:22px;color:#161616;font-weight:700;letter-spacing:1.510px;text-shadow:0 0 3px rgba(125,126,108,.9),0 0 2px rgba(125,126,108,.9);">ALA.</div><div class="t" style="left:1450.60px;top:550.01px;font-size:17.3px;line-height:22px;color:#161616;font-weight:700;letter-spacing:0.815px;text-shadow:0 0 3px rgba(125,126,108,.9),0 0 2px rgba(125,126,108,.9);">GA.</div><div class="t" style="left:1500.50px;top:507.81px;font-size:17.3px;line-height:22px;color:#161616;font-weight:700;letter-spacing:1.339px;text-shadow:0 0 3px rgba(125,126,108,.9),0 0 2px rgba(125,126,108,.9);">S.C.</div><div class="t" style="left:1472.30px;top:639.01px;font-size:17.3px;line-height:22px;color:#161616;font-weight:700;letter-spacing:1.641px;text-shadow:0 0 3px rgba(125,126,108,.9),0 0 2px rgba(125,126,108,.9);">FLA.</div><div class="t" style="left:656.20px;top:519.52px;font-size:21px;line-height:27px;color:#2d2e2a;letter-spacing:-0.619px;text-shadow:0 0 3px rgba(125,126,108,.9),0 0 2px rgba(125,126,108,.9);">San Diego</div><div class="t" style="left:1155.60px;top:632.02px;font-size:21px;line-height:27px;color:#2d2e2a;letter-spacing:-0.388px;text-shadow:0 0 3px rgba(125,126,108,.9),0 0 2px rgba(125,126,108,.9);">Houston</div><div class="t" style="left:1408.40px;top:490.92px;font-size:21px;line-height:27px;color:#2d2e2a;letter-spacing:-0.126px;text-shadow:0 0 3px rgba(125,126,108,.9),0 0 2px rgba(125,126,108,.9);">Atlanta</div><div class="t" style="left:1910.70px;top:137.91px;font-size:17.3px;line-height:22px;color:#161616;font-weight:700;letter-spacing:2.135px;text-shadow:0 0 3px rgba(125,126,108,.9),0 0 2px rgba(125,126,108,.9);">E.I.</div><div class="t" style="left:1908.70px;top:176.71px;font-size:17.3px;line-height:22px;color:#161616;font-weight:700;letter-spacing:2.010px;text-shadow:0 0 3px rgba(125,126,108,.9),0 0 2px rgba(125,126,108,.9);">I.S.</div><div style="position:absolute;left:2054.2999999999997px;top:18.000000000000092px;width:64.8px;height:64.8px;background:#737373;border-radius:50%;box-shadow:0 2px 6px rgba(0,0,0,.3);"></div><svg style="position:absolute;left:2065.20px;top:28.90px;" width="43" height="43" viewBox="0 0 24 24" fill="#141414"><path d="M11.99 18.54l-7.37-5.73L3 14.07l9 7 9-7-1.63-1.27-7.38 5.74zM12 16l7.36-5.73L21 9l-9-7-9 7 1.63 1.27L12 16zm0-11.47L17.74 9 12 13.47 6.26 9 12 4.53z"/></svg><div style="position:absolute;left:2152.2px;top:18.899999999999977px;width:47px;height:92.7px;background:#737373;border-radius:5px;box-shadow:0 1px 6px rgba(0,0,0,.3);"></div><div style="position:absolute;left:2152.2px;top:65px;width:47px;height:1px;background:#646464;"></div><div style="position:absolute;left:2167.85px;top:40.549999999999955px;width:15.3px;height:3.5px;background:#141414;"></div><div style="position:absolute;left:2173.75px;top:34.649999999999956px;width:3.5px;height:15.3px;background:#141414;"></div><div style="position:absolute;left:2167.85px;top:87.04999999999995px;width:15.3px;height:3.5px;background:#141414;"></div><div style="position:absolute;left:18.40000000000009px;top:449.79999999999995px;width:51.9px;height:155.8px;background:#737373;border-radius:5.500px;box-shadow:0 0 0 2.500px rgba(0,0,0,.1);"></div><div style="position:absolute;left:18.40000000000009px;top:502px;width:51.9px;height:1px;background:#656565;"></div><div style="position:absolute;left:18.40000000000009px;top:553.8px;width:51.9px;height:1px;background:#656565;"></div><svg style="position:absolute;left:30.200000000000045px;top:462px" width="28" height="28" viewBox="0 0 28 28"><rect x="6.600" y="6.600" width="14.800" height="14.800" fill="none" stroke="#101010" stroke-width="3.200"/><g fill="#101010"><circle cx="6.600" cy="6.600" r="3.600"/><circle cx="21.400" cy="6.600" r="3.600"/><circle cx="6.600" cy="21.400" r="3.600"/><circle cx="21.400" cy="21.400" r="3.600"/></g></svg><svg style="position:absolute;left:30.200000000000045px;top:513px" width="28" height="30" viewBox="0 0 28 30"><path d="M14 3.500c-5.300 0-9.200 4-9.200 9 0 5.500 5.700 10.300 9.200 14 3.500-3.700 9.200-8.500 9.200-14 0-5-3.900-9-9.200-9z" fill="none" stroke="#101010" stroke-width="3.300" stroke-linejoin="round"/></svg><svg style="position:absolute;left:30.200000000000045px;top:568px" width="28" height="28" viewBox="0 0 28 28"><path d="M3.200 4.200h7.300c.3-1.600 1.700-2.600 3.500-2.600s3.200 1 3.500 2.600h7.300v3H3.200z" fill="#101010"/><path d="M5 9.200h18v13.300c0 1.800-1.400 3.200-3.200 3.200H8.200c-1.800 0-3.200-1.400-3.200-3.200z" fill="#101010"/><path d="M9.900 9.200h2v9.800h-2zM16.100 9.200h2v9.800h-2z" fill="#737373"/></svg><svg style="position:absolute;left:9.200000000000045px;top:621px" width="170" height="48" viewBox="0 0 170 48"><circle cx="22.700" cy="23.400" r="18.700" fill="#384f5d"/><circle cx="22.700" cy="23.400" r="16.600" fill="#72838c"/><circle cx="22.700" cy="23.400" r="12.800" fill="#476070"/><path d="M24.500 14.500c5 0 8.500 3.600 8.500 8.300 0 5-4 8.700-9.500 8.700-3.500 0-8.500 1.500-10.500 1.200 1-2.500 2.500-6 2.800-9.700.5-5 4-8.500 8.700-8.500z" fill="#72838c"/><path d="M25 17.800l1.500 3.700 3.700 1.500-3.700 1.500-1.500 3.700-1.500-3.700-3.700-1.500 3.700-1.500z" fill="#486170"/><text x="46" y="31.800" font-family="Liberation Sans,sans-serif" font-weight="700" font-size="29.500" fill="#72838c" stroke="#384f5d" stroke-width="3.200" stroke-linejoin="round" paint-order="stroke" letter-spacing="-0.300">mapbox</text></svg><div class="t" style="left:1926.20px;top:636.22px;font-size:21px;line-height:27px;color:#4f6774;letter-spacing:6.035px;font-style:italic;">Sargasso</div><div style="position:absolute;left:1715.2px;top:641px;width:503.5px;height:36px;background:rgba(112,118,122,.5);"></div><div class="t" style="left:1724.20px;top:644.88px;font-size:22px;line-height:29px;color:#2a2c2e;letter-spacing:0.319px;">© Mapbox © OpenStreetMap</div><div class="t" style="left:2026.20px;top:646.22px;font-size:21px;line-height:27px;color:#262626;font-weight:700;letter-spacing:0.508px;">Improve this map</div></div>
<div style="position:absolute;left:615px;top:1740px;width:2218px;height:1.5px;background:#676767;"></div>
<div style="position:absolute;left:572px;top:1804px;width:2304px;height:1.4px;background:#676767;"></div>
<div class="t" style="left:2587.00px;top:1841.14px;font-size:25px;line-height:32px;color:#1b1b1b;letter-spacing:2.514px;">CANCEL</div>
<div style="position:absolute;left:2736px;top:1825px;width:126px;height:64.8px;background:#1c1c1c;border-radius:5.500px;box-shadow:0 4px 6px -1px rgba(0,0,0,.3),0 2px 4px rgba(0,0,0,.2);"></div>
<div class="t" style="left:2764.62px;top:1841.34px;font-size:25px;line-height:32px;color:#7a7a7a;letter-spacing:1.039px;">SAVE</div>
<!-- file dialog -->
<div style="position:absolute;left:923px;top:503px;width:1601px;height:969px;border-radius:20px;box-shadow:0 32px 60px -8px rgba(0,0,0,.36),0 3px 16px rgba(0,0,0,.14);"></div>
<div style="position:absolute;left:923px;top:503px;width:1601px;height:969px;border-radius:20px;overflow:hidden;"><div style="position:absolute;left:0px;top:0px;width:310px;height:969px;background:#2a2b2d;"></div><div style="position:absolute;left:310px;top:0px;width:1291px;height:969px;background:#232426;"></div><div style="position:absolute;left:309px;top:0px;width:2px;height:969px;background:#0a0a0a;"></div><div class="t" style="left:34.30px;top:34.68px;font-size:22px;line-height:29px;color:#747476;font-weight:700;letter-spacing:-0.024px;">Favorites</div><div style="position:absolute;left:21px;top:289px;width:268px;height:56px;background:#434446;border-radius:10px;"></div><svg style="position:absolute;left:38px;top:78.79999999999995px" width="30" height="30" viewBox="0 0 30 30" fill="none" stroke="#36619a" stroke-width="2.05" stroke-linecap="round" stroke-linejoin="round"><circle cx="15" cy="15" r="11.950"/><path d="M15 8V15.600H9"/></svg><div class="t" style="left:81.30px;top:77.09px;font-size:26px;line-height:34px;color:#727274;letter-spacing:0.017px;">Recents</div><svg style="position:absolute;left:38px;top:134.79999999999995px" width="30" height="30" viewBox="0 0 30 30" fill="none" stroke="#36619a" stroke-width="2.800" stroke-linecap="round"><path d="M13.200 4.300L15.700 8.600M17.800 4.300L7.300 22.300M15.700 12.400L21.800 22.300M2.700 19.200H16.600M20.600 19.200H27.300M4.300 25.700L5.600 23.600M25.700 25.700L24.400 23.600"/></svg><div class="t" style="left:81.30px;top:133.09px;font-size:26px;line-height:34px;color:#727274;letter-spacing:0.625px;">Applications</div><svg style="position:absolute;left:37px;top:193px" width="32" height="26" viewBox="0 0 32 26" fill="none" stroke="#36619a" stroke-width="2.05"><rect x="2" y="2.900" width="28" height="20.500" rx="3.300"/><path d="M2 6.600H30" stroke-width="1.300"/><rect x="7" y="16.500" width="18.500" height="4.400" rx="1" fill="#36619a" stroke="none"/></svg><div class="t" style="left:81.30px;top:189.29px;font-size:26px;line-height:34px;color:#727274;letter-spacing:0.560px;">Desktop</div><svg style="position:absolute;left:41px;top:247px" width="24" height="30" viewBox="0 0 24 30" fill="none" stroke="#36619a" stroke-width="2.05" stroke-linejoin="round"><path d="M5 2.800H13L21.500 11.300V24.500a3 3 0 0 1-3 3H5a3 3 0 0 1-3-3V5.800a3 3 0 0 1 3-3z"/><path d="M13 2.800V8.800a2.500 2.500 0 0 0 2.500 2.500H21.500"/></svg><div class="t" style="left:81.30px;top:245.29px;font-size:26px;line-height:34px;color:#727274;letter-spacing:0.578px;">Documents</div><svg style="position:absolute;left:38px;top:302.70000000000005px" width="30" height="30" viewBox="0 0 30 30" fill="none" stroke="#36619a" stroke-width="2.05" stroke-linecap="round" stroke-linejoin="round"><circle cx="15" cy="15" r="11.950"/><path d="M15 8.600V21M10.300 16.600L15 21.300L19.700 16.600"/></svg><div class="t" style="left:81.30px;top:300.99px;font-size:26px;line-height:34px;color:#727274;letter-spacing:0.397px;">Downloads</div><div class="t" style="left:34.30px;top:378.88px;font-size:22px;line-height:29px;color:#747476;font-weight:700;letter-spacing:-0.238px;">iCloud</div><svg style="position:absolute;left:36px;top:425.20000000000005px" width="34" height="24" viewBox="0 0 34 24" fill="none" stroke="#3a7784" stroke-width="2.05" stroke-linejoin="round"><path d="M9 22a6.500 6.500 0 0 1-1.500-12.800A6 6 0 0 1 15.500 6a8.500 8.500 0 0 1 15.800 3.500A6.300 6.300 0 0 1 26.500 22z"/></svg><div class="t" style="left:81.30px;top:420.49px;font-size:26px;line-height:34px;color:#727274;letter-spacing:0.333px;">iCloud Drive</div><svg style="position:absolute;left:36px;top:478.5px" width="36" height="30" viewBox="0 0 36 30" fill="none" stroke="#3a7784" stroke-width="2.05" stroke-linejoin="round"><path d="M20 6.500H13.500L11 3.500H5a3 3 0 0 0-3 3V24a3 3 0 0 0 3 3H26a3 3 0 0 0 3-3V16"/><path d="M2 11H20"/><circle cx="28" cy="7.500" r="6.500" fill="#3a7784" stroke="none"/><circle cx="28" cy="5.500" r="2" fill="#2a2b2d" stroke="none"/><path d="M24.300 11a3.800 3.800 0 0 1 7.400 0z" fill="#2a2b2d" stroke="none"/></svg><div class="t" style="left:81.30px;top:476.79px;font-size:26px;line-height:34px;color:#727274;letter-spacing:-0.007px;">Shared</div><div class="t" style="left:34.30px;top:554.88px;font-size:22px;line-height:29px;color:#747476;font-weight:700;letter-spacing:-0.179px;">Tags</div><div style="position:absolute;left:42.799999999999955px;top:604.6000000000001px;width:19.6px;height:19.6px;background:#7f4a48;border-radius:50%;"></div><div class="t" style="left:81.30px;top:596.99px;font-size:26px;line-height:34px;color:#727274;letter-spacing:-0.799px;">Red</div><div style="position:absolute;left:42.799999999999955px;top:660.9000000000001px;width:19.6px;height:19.6px;background:#7a6030;border-radius:50%;"></div><div class="t" style="left:81.30px;top:653.29px;font-size:26px;line-height:34px;color:#727274;letter-spacing:0.146px;">Orange</div><div style="position:absolute;left:42.799999999999955px;top:716.9000000000001px;width:19.6px;height:19.6px;background:#7c7438;border-radius:50%;"></div><div class="t" style="left:81.30px;top:709.29px;font-size:26px;line-height:34px;color:#727274;letter-spacing:0.116px;">Yellow</div><div style="position:absolute;left:42.799999999999955px;top:772.9000000000001px;width:19.6px;height:19.6px;background:#3d7348;border-radius:50%;"></div><div class="t" style="left:81.30px;top:765.29px;font-size:26px;line-height:34px;color:#727274;letter-spacing:-0.172px;">Green</div><div style="position:absolute;left:42.799999999999955px;top:828.5px;width:19.6px;height:19.6px;background:#355a80;border-radius:50%;"></div><div class="t" style="left:81.30px;top:820.89px;font-size:26px;line-height:34px;color:#727274;letter-spacing:-0.135px;">Blue</div><div style="position:absolute;left:42.799999999999955px;top:884.5px;width:19.6px;height:19.6px;background:#6b4d7e;border-radius:50%;"></div><div class="t" style="left:81.30px;top:876.89px;font-size:26px;line-height:34px;color:#727274;letter-spacing:0.240px;">Purple</div><div style="position:absolute;left:42.799999999999955px;top:940.9000000000001px;width:19.6px;height:19.6px;background:#58585a;border-radius:50%;"></div><div class="t" style="left:81.30px;top:933.29px;font-size:26px;line-height:34px;color:#727274;letter-spacing:-0.335px;">Gray</div><div style="position:absolute;left:351px;top:43px;width:46px;height:40.3px;background:#5a5b5d;border-radius:10px;"></div><div style="position:absolute;left:399px;top:43px;width:46px;height:40.3px;background:#5a5b5d;border-radius:10px;"></div><svg style="position:absolute;left:362.00px;top:47.00px" width="20" height="30" viewBox="0 0 20 30" fill="none" stroke="#dedede" stroke-width="2.300" stroke-linecap="round" stroke-linejoin="round"><path d="M16.200 5.200L5.200 15l11 9.800"/></svg><svg style="position:absolute;left:413.00px;top:47.00px" width="20" height="30" viewBox="0 0 20 30" fill="none" stroke="#7c7d7f" stroke-width="2.300" stroke-linecap="round" stroke-linejoin="round"><path d="M5.200 5.200L16.200 15l-11 9.800"/></svg><div style="position:absolute;left:461px;top:43px;width:92px;height:40.3px;background:#5a5b5d;border-radius:10px;"></div><svg style="position:absolute;left:479.00px;top:49.00px" width="32" height="27" viewBox="0 0 32 27" fill="none" stroke="#dedede" stroke-width="2.200"><rect x="2.100" y="2.700" width="27.700" height="21.400" rx="3.600"/><path d="M11.400 2.700v21.400M20.800 2.700v21.400"/></svg><svg style="position:absolute;left:524.00px;top:57.00px" width="18" height="13" viewBox="0 0 18 13" fill="none" stroke="#dedede" stroke-width="2.900" stroke-linecap="round" stroke-linejoin="round"><path d="M3.300 3.400l5.800 5.800 5.800-5.800"/></svg><div style="position:absolute;left:569px;top:43px;width:90.2px;height:40.3px;background:#5a5b5d;border-radius:10px;"></div><svg style="position:absolute;left:587.00px;top:48.00px" width="29" height="30" viewBox="0 0 29 30" fill="none" stroke="#dedede" stroke-width="1.900"><path d="M.800 1.700h27.400M.800 16.600h27.400" stroke-width="2"/><rect x="1.9" y="6.7" width="6.400" height="5.500" rx="1.200"/><rect x="1.9" y="21.6" width="6.400" height="5.500" rx="1.200"/><rect x="11.5" y="6.7" width="6.400" height="5.500" rx="1.200"/><rect x="11.5" y="21.6" width="6.400" height="5.500" rx="1.200"/><rect x="21.1" y="6.7" width="6.400" height="5.500" rx="1.200"/><rect x="21.1" y="21.6" width="6.400" height="5.500" rx="1.200"/></svg><svg style="position:absolute;left:630.30px;top:57.00px" width="18" height="13" viewBox="0 0 18 13" fill="none" stroke="#dedede" stroke-width="2.900" stroke-linecap="round" stroke-linejoin="round"><path d="M3.300 3.400l5.800 5.800 5.800-5.800"/></svg><div style="position:absolute;left:749px;top:43px;width:414px;height:40px;background:#5a5b5d;border-radius:8px;"></div><svg style="position:absolute;left:766px;top:49px" width="30" height="28" viewBox="0 0 30 28"><path d="M1 4a3 3 0 0 1 3-3h7l3 3h12a3 3 0 0 1 3 3v3H1z" fill="#4f9ed8"/><rect x="1" y="6" width="28" height="21" rx="3" fill="#6ab7ea"/><circle cx="15" cy="16.500" r="5.500" fill="#3d8fd0"/><path d="M15 13.500v6M12.500 17.500l2.500 2.500 2.500-2.500" stroke="#6ab7ea" stroke-width="1.500" fill="none"/></svg><div class="t" style="left:805.50px;top:45.59px;font-size:26px;line-height:34px;color:#e2e2e2;letter-spacing:0.486px;-webkit-text-stroke:0.3px #e2e2e2;">Downloads</div><svg style="position:absolute;left:1135px;top:50px" width="16" height="26" viewBox="0 0 16 26" fill="none" stroke="#e4e4e4" stroke-width="2.800" stroke-linecap="round" stroke-linejoin="round"><path d="M2.500 9.500L8 4l5.500 5.500M2.500 16.500L8 22l5.500-5.500"/></svg><div style="position:absolute;left:1255px;top:43px;width:304px;height:40px;background:#303133;border:2px solid #4a4b4d;border-radius:9px;box-sizing:border-box;"></div><svg style="position:absolute;left:1268px;top:50px" width="28" height="28" viewBox="0 0 28 28" fill="none" stroke="#cfcfcf" stroke-width="2.400" stroke-linecap="round"><circle cx="11.500" cy="11.500" r="8.500"/><path d="M18 18l7.500 7.500"/></svg><div class="t" style="left:1309.00px;top:46.99px;font-size:26px;line-height:34px;color:#6f7072;letter-spacing:-0.063px;">Search</div><div style="position:absolute;left:311px;top:125px;width:1290px;height:1.6px;background:#3f3f41;"></div><div class="t" style="left:385.40px;top:140.38px;font-size:22px;line-height:29px;color:#8e8e90;font-weight:700;letter-spacing:0.134px;">Previous 7 Days</div><div style="position:absolute;left:311px;top:181.70000000000005px;width:488px;height:1.6px;background:#3f3f41;"></div><div style="position:absolute;left:799px;top:127px;width:2px;height:720px;background:#0a0a0a;"></div><div style="position:absolute;left:331px;top:791px;width:448px;height:44px;background:#464749;border-radius:10px;"></div><svg style="position:absolute;left:346.79999999999995px;top:201.29999999999995px" width="24.4" height="28.2" viewBox="0 0 25 29"><path d="M2.500 0H16L25 9V26.500a2.500 2.500 0 0 1-2.500 2.500h-20A2.500 2.500 0 0 1 0 26.500v-24A2.500 2.500 0 0 1 2.500 0z" fill="#ededed"/><path d="M16 0V6.500a2.500 2.500 0 0 0 2.500 2.500H25z" fill="#c9c9c9"/><rect x="10.500" y="0" width="4" height="13" fill="#8a8a8a"/><rect x="11.300" y="2" width="2.400" height="2" fill="#e8e8e8"/><rect x="11.300" y="5.500" width="2.400" height="2" fill="#e8e8e8"/><rect x="10" y="9.500" width="5" height="5.500" rx="1" fill="#5d5d5d"/></svg><div class="t" style="left:385.00px;top:199.39px;font-size:26px;line-height:34px;color:#dfdfdf;letter-spacing:0.621px;">shp_trans_tp...50aviation.zip</div><svg style="position:absolute;left:346.79999999999995px;top:340.69999999999993px" width="24.4" height="28.2" viewBox="0 0 25 29"><path d="M2.500 0H16L25 9V26.500a2.500 2.500 0 0 1-2.500 2.500h-20A2.500 2.500 0 0 1 0 26.500v-24A2.500 2.500 0 0 1 2.500 0z" fill="#868686"/><path d="M16 0V6.500a2.500 2.500 0 0 0 2.500 2.500H25z" fill="#a4a4a4"/></svg><div class="t" style="left:385.00px;top:338.79px;font-size:26px;line-height:34px;color:#565658;letter-spacing:1.019px;">85.pbf</div><svg style="position:absolute;left:346.79999999999995px;top:480.79999999999995px" width="24.4" height="28.2" viewBox="0 0 25 29"><path d="M2.500 0H16L25 9V26.500a2.500 2.500 0 0 1-2.500 2.500h-20A2.500 2.500 0 0 1 0 26.500v-24A2.500 2.500 0 0 1 2.500 0z" fill="#868686"/><path d="M16 0V6.500a2.500 2.500 0 0 0 2.500 2.500H25z" fill="#a4a4a4"/></svg><div class="t" style="left:385.00px;top:478.89px;font-size:26px;line-height:34px;color:#565658;letter-spacing:0.497px;">0 (1).pbf</div><svg style="position:absolute;left:346.79999999999995px;top:524.8000000000002px" width="24.4" height="28.2" viewBox="0 0 25 29"><path d="M2.500 0H16L25 9V26.500a2.500 2.500 0 0 1-2.500 2.500h-20A2.500 2.500 0 0 1 0 26.500v-24A2.500 2.500 0 0 1 2.500 0z" fill="#868686"/><path d="M16 0V6.500a2.500 2.500 0 0 0 2.500 2.500H25z" fill="#a4a4a4"/></svg><div class="t" style="left:385.00px;top:522.89px;font-size:26px;line-height:34px;color:#565658;letter-spacing:0.952px;">0 (2).pbf</div><svg style="position:absolute;left:346.79999999999995px;top:568.7px" width="24.4" height="28.2" viewBox="0 0 25 29"><path d="M2.500 0H16L25 9V26.500a2.500 2.500 0 0 1-2.500 2.500h-20A2.500 2.500 0 0 1 0 26.500v-24A2.500 2.500 0 0 1 2.500 0z" fill="#868686"/><path d="M16 0V6.500a2.500 2.500 0 0 0 2.500 2.500H25z" fill="#a4a4a4"/></svg><div class="t" style="left:385.00px;top:566.79px;font-size:26px;line-height:34px;color:#565658;letter-spacing:0.875px;">0.pbf</div><svg style="position:absolute;left:346.79999999999995px;top:612.7px" width="24.4" height="28.2" viewBox="0 0 25 29"><path d="M2.500 0H16L25 9V26.500a2.500 2.500 0 0 1-2.500 2.500h-20A2.500 2.500 0 0 1 0 26.500v-24A2.500 2.500 0 0 1 2.500 0z" fill="#868686"/><path d="M16 0V6.500a2.500 2.500 0 0 0 2.500 2.500H25z" fill="#a4a4a4"/></svg><div class="t" style="left:385.00px;top:610.79px;font-size:26px;line-height:34px;color:#565658;letter-spacing:0.035px;">1.pbf</div><svg style="position:absolute;left:346.79999999999995px;top:652.5px" width="24.4" height="28.2" viewBox="0 0 25 29"><path d="M2.500 0H16L25 9V26.500a2.500 2.500 0 0 1-2.500 2.500h-20A2.500 2.500 0 0 1 0 26.500v-24A2.500 2.500 0 0 1 2.500 0z" fill="#ededed"/><path d="M16 0V6.500a2.500 2.500 0 0 0 2.500 2.500H25z" fill="#c9c9c9"/><rect x="10.500" y="0" width="4" height="13" fill="#8a8a8a"/><rect x="11.300" y="2" width="2.400" height="2" fill="#e8e8e8"/><rect x="11.300" y="5.500" width="2.400" height="2" fill="#e8e8e8"/><rect x="10" y="9.500" width="5" height="5.500" rx="1" fill="#5d5d5d"/></svg><div class="t" style="left:385.00px;top:650.59px;font-size:26px;line-height:34px;color:#dfdfdf;letter-spacing:0.315px;">HawaiinIslands.zip</div><svg style="position:absolute;left:346.79999999999995px;top:797.9000000000001px" width="24.4" height="28.2" viewBox="0 0 25 29"><path d="M2.500 0H16L25 9V26.500a2.500 2.500 0 0 1-2.500 2.500h-20A2.500 2.500 0 0 1 0 26.500v-24A2.500 2.500 0 0 1 2.500 0z" fill="#ededed"/><path d="M16 0V6.500a2.500 2.500 0 0 0 2.500 2.500H25z" fill="#c9c9c9"/><rect x="4" y="5" width="9" height="1.200" fill="#a8a8a8"/><rect x="4" y="8" width="11" height="1.200" fill="#a8a8a8"/><rect x="4" y="11" width="16" height="1.200" fill="#a8a8a8"/><rect x="4" y="13.5" width="14" height="1.200" fill="#a8a8a8"/><rect x="4" y="16" width="16" height="1.200" fill="#a8a8a8"/><rect x="4" y="18.5" width="12" height="1.200" fill="#a8a8a8"/><rect x="4" y="21" width="16" height="1.200" fill="#a8a8a8"/><rect x="4" y="23.5" width="15" height="1.200" fill="#a8a8a8"/></svg><div class="t" style="left:385.00px;top:795.99px;font-size:26px;line-height:34px;color:#dfdfdf;letter-spacing:0.469px;">an_overlay_topology.geojson</div><div class="t" style="left:385.40px;top:294.88px;font-size:22px;line-height:29px;color:#8e8e90;font-weight:700;letter-spacing:0.361px;">Previous 30 Days</div><div class="t" style="left:385.40px;top:434.38px;font-size:22px;line-height:29px;color:#8e8e90;font-weight:700;letter-spacing:0.039px;">August</div><div class="t" style="left:385.40px;top:750.38px;font-size:22px;line-height:29px;color:#8e8e90;font-weight:700;letter-spacing:-0.005px;">July</div><div style="position:absolute;left:311px;top:837px;width:488px;height:10px;overflow:hidden;"><svg style="position:absolute;left:34px;top:6px" width="30" height="24" viewBox="0 0 30 24"><path d="M0 2.500a2.500 2.500 0 0 1 2.500-2.500h6.500l3 2.500h15.500a2.500 2.500 0 0 1 2.500 2.500v19H0z" fill="#4fa3e0"/></svg><div class="t" style="left:74.40px;top:-0.81px;font-size:26px;line-height:34px;color:#dfdfdf;">Bounding Files node Test Dir</div></div><div style="position:absolute;left:821px;top:147px;width:758px;height:445px;background:#1d1d1d;border:2px solid #38393b;border-radius:14px;box-sizing:border-box;"></div><div class="t" style="left:837.00px;top:147.68px;font-size:20px;line-height:26px;color:#f2f2f2;letter-spacing:0.040px;font-family:'DejaVu Sans Mono','Liberation Mono',monospace;-webkit-text-stroke:0.5px #f2f2f2;">{</div><div class="t" style="left:860.16px;top:169.74px;font-size:20px;line-height:26px;color:#f2f2f2;letter-spacing:0.040px;font-family:'DejaVu Sans Mono','Liberation Mono',monospace;-webkit-text-stroke:0.5px #f2f2f2;">&quot;type&quot;: &quot;FeatureCollection&quot;,</div><div class="t" style="left:860.16px;top:191.80px;font-size:20px;line-height:26px;color:#f2f2f2;letter-spacing:0.040px;font-family:'DejaVu Sans Mono','Liberation Mono',monospace;-webkit-text-stroke:0.5px #f2f2f2;">&quot;features&quot;: [</div><div class="t" style="left:884.12px;top:213.86px;font-size:20px;line-height:26px;color:#f2f2f2;letter-spacing:0.040px;font-family:'DejaVu Sans Mono','Liberation Mono',monospace;-webkit-text-stroke:0.5px #f2f2f2;">{</div><div class="t" style="left:908.08px;top:235.92px;font-size:20px;line-height:26px;color:#f2f2f2;letter-spacing:0.040px;font-family:'DejaVu Sans Mono','Liberation Mono',monospace;-webkit-text-stroke:0.5px #f2f2f2;">&quot;type&quot;: &quot;Feature&quot;,</div><div class="t" style="left:908.08px;top:257.98px;font-size:20px;line-height:26px;color:#f2f2f2;letter-spacing:0.040px;font-family:'DejaVu Sans Mono','Liberation Mono',monospace;-webkit-text-stroke:0.5px #f2f2f2;">&quot;geometry&quot;: {</div><div class="t" style="left:932.04px;top:280.04px;font-size:20px;line-height:26px;color:#f2f2f2;letter-spacing:0.040px;font-family:'DejaVu Sans Mono','Liberation Mono',monospace;-webkit-text-stroke:0.5px #f2f2f2;">&quot;type&quot;: &quot;LineString&quot;,</div><div class="t" style="left:932.04px;top:302.10px;font-size:20px;line-height:26px;color:#f2f2f2;letter-spacing:0.040px;font-family:'DejaVu Sans Mono','Liberation Mono',monospace;-webkit-text-stroke:0.5px #f2f2f2;">&quot;coordinates&quot;: [</div><div class="t" style="left:956.00px;top:324.16px;font-size:20px;line-height:26px;color:#f2f2f2;letter-spacing:0.040px;font-family:'DejaVu Sans Mono','Liberation Mono',monospace;-webkit-text-stroke:0.5px #f2f2f2;">[0, 0],</div><div class="t" style="left:956.00px;top:346.22px;font-size:20px;line-height:26px;color:#f2f2f2;letter-spacing:0.040px;font-family:'DejaVu Sans Mono','Liberation Mono',monospace;-webkit-text-stroke:0.5px #f2f2f2;">[0, 1],</div><div class="t" style="left:956.00px;top:368.28px;font-size:20px;line-height:26px;color:#f2f2f2;letter-spacing:0.040px;font-family:'DejaVu Sans Mono','Liberation Mono',monospace;-webkit-text-stroke:0.5px #f2f2f2;">[0, 2],</div><div class="t" style="left:956.00px;top:390.34px;font-size:20px;line-height:26px;color:#f2f2f2;letter-spacing:0.040px;font-family:'DejaVu Sans Mono','Liberation Mono',monospace;-webkit-text-stroke:0.5px #f2f2f2;">[0, 3],</div><div class="t" style="left:956.00px;top:412.40px;font-size:20px;line-height:26px;color:#f2f2f2;letter-spacing:0.040px;font-family:'DejaVu Sans Mono','Liberation Mono',monospace;-webkit-text-stroke:0.5px #f2f2f2;">[0, 4],</div><div class="t" style="left:956.00px;top:434.46px;font-size:20px;line-height:26px;color:#f2f2f2;letter-spacing:0.040px;font-family:'DejaVu Sans Mono','Liberation Mono',monospace;-webkit-text-stroke:0.5px #f2f2f2;">[0, 5],</div><div class="t" style="left:956.00px;top:456.52px;font-size:20px;line-height:26px;color:#f2f2f2;letter-spacing:0.040px;font-family:'DejaVu Sans Mono','Liberation Mono',monospace;-webkit-text-stroke:0.5px #f2f2f2;">[0, 6],</div><div class="t" style="left:956.00px;top:478.58px;font-size:20px;line-height:26px;color:#f2f2f2;letter-spacing:0.040px;font-family:'DejaVu Sans Mono','Liberation Mono',monospace;-webkit-text-stroke:0.5px #f2f2f2;">[0, 7],</div><div class="t" style="left:956.00px;top:500.64px;font-size:20px;line-height:26px;color:#f2f2f2;letter-spacing:0.040px;font-family:'DejaVu Sans Mono','Liberation Mono',monospace;-webkit-text-stroke:0.5px #f2f2f2;">[0, 8],</div><div class="t" style="left:956.00px;top:522.70px;font-size:20px;line-height:26px;color:#f2f2f2;letter-spacing:0.040px;font-family:'DejaVu Sans Mono','Liberation Mono',monospace;-webkit-text-stroke:0.5px #f2f2f2;">[0, 9],</div><div class="t" style="left:956.00px;top:544.76px;font-size:20px;line-height:26px;color:#f2f2f2;letter-spacing:0.040px;font-family:'DejaVu Sans Mono','Liberation Mono',monospace;-webkit-text-stroke:0.5px #f2f2f2;">[1, 0],</div><div class="t" style="left:956.00px;top:566.82px;font-size:20px;line-height:26px;color:#f2f2f2;letter-spacing:0.040px;font-family:'DejaVu Sans Mono','Liberation Mono',monospace;-webkit-text-stroke:0.5px #f2f2f2;">[1, 2],</div><div class="t" style="left:820.50px;top:646.08px;font-size:29.5px;line-height:38px;color:#e3e3e3;letter-spacing:1.237px;-webkit-text-stroke:0.3px #e3e3e3;">an_overlay_topology.geojson</div><div class="t" style="left:820.30px;top:690.33px;font-size:25.6px;line-height:33px;color:#8e8e90;letter-spacing:0.587px;">Plain Text Document - 7.2 MB</div><div class="t" style="left:820.50px;top:738.39px;font-size:25.7px;line-height:33px;color:#e6e6e6;font-weight:700;letter-spacing:0.333px;">Information</div><div class="t" style="left:1463.27px;top:741.38px;font-size:22px;line-height:29px;color:#4e9cf7;letter-spacing:0.470px;">Show More</div><div class="t" style="left:821.00px;top:785.78px;font-size:22px;line-height:29px;color:#8e8e90;font-weight:700;letter-spacing:0.369px;">Created</div><div class="t" style="left:1225.92px;top:785.58px;font-size:22px;line-height:29px;color:#e3e3e3;font-weight:700;letter-spacing:0.417px;">Friday, July 25, 2025 at 11:38 AM</div><div style="position:absolute;left:821px;top:822.3px;width:758px;height:1.5px;background:#3e3e40;"></div><div style="position:absolute;left:801px;top:833px;width:800px;height:14px;overflow:hidden;"><div class="t" style="left:20.00px;top:-1.22px;font-size:22px;line-height:29px;color:#8e8e90;font-weight:700;letter-spacing:0.321px;">Modified</div><div class="t" style="left:614.90px;top:-1.22px;font-size:22px;line-height:29px;color:#e3e3e3;font-weight:700;letter-spacing:0.401px;">Today, 6:08 PM</div></div><div style="position:absolute;left:311px;top:847px;width:1290px;height:2px;background:#3b3b3d;"></div><div style="position:absolute;left:351px;top:889px;width:226px;height:40.2px;background:#5a5b5d;border-radius:10px;box-shadow:0 1px 0 rgba(255,255,255,.07) inset;"></div><div class="t" style="left:380.03px;top:890.99px;font-size:26px;line-height:34px;color:#e4e4e4;letter-spacing:0.553px;">Show Options</div><div style="position:absolute;left:1257px;top:889px;width:144px;height:40.2px;background:#5a5b5d;border-radius:10px;box-shadow:0 1px 0 rgba(255,255,255,.07) inset;"></div><div class="t" style="left:1287.46px;top:890.99px;font-size:26px;line-height:34px;color:#e4e4e4;letter-spacing:0.428px;">Cancel</div><div style="position:absolute;left:1417px;top:889px;width:144px;height:40.2px;background:#5a5b5d;border-radius:10px;box-shadow:0 1px 0 rgba(255,255,255,.07) inset;"></div><div class="t" style="left:1456.49px;top:890.99px;font-size:26px;line-height:34px;color:#e4e4e4;letter-spacing:0.474px;">Open</div></div>
<div style="position:absolute;left:923px;top:503px;width:1601px;height:969px;border-radius:20px;box-shadow:inset 0 0 0 1.2px #080808,inset 0 0 0 2.8px rgba(255,255,255,.25);pointer-events:none;"></div>
</div></body></html>
